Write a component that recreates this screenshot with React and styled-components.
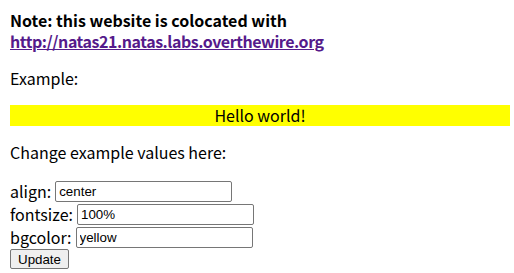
import React, { useState } from 'react'
import styled, { createGlobalStyle } from 'styled-components'

const GlobalStyle = createGlobalStyle`
  body {
    margin: 10px 4px 10px 10px;
    background: #fff;
    color: #000;
    font-family: "Noto Sans CJK KR", "Noto Sans", sans-serif;
    font-size: 16px;
    line-height: 21px;
  }
`

const Note = styled.div`
  font-weight: bold;
  a {
    color: #551a8b;
    text-decoration: underline;
    letter-spacing: -0.45px;
  }
`

const Para = styled.p`
  margin: 16px 0;
`

const Example = styled.div`
  background: ${p => p.bg};
  text-align: ${p => p.align};
  font-size: ${p => p.size};
  margin: 16px 0;
`

const Form = styled.form`
  display: flex;
  flex-direction: column;
  margin-top: 17px;
`

const Row = styled.div`
  display: flex;
  align-items: ${p => (p.top ? 'flex-start' : 'center')};
  gap: 4px;
  height: 23px;
`

const Input = styled.input`
  box-sizing: border-box;
  width: 177px;
  height: 21px;
  padding: 1px 3px;
  border: 1px solid #767676;
  border-radius: 2px;
  font-family: "Liberation Sans", Arial, sans-serif;
  font-size: 13.33px;
  color: #000;
  background: #fff;
`

const Button = styled.button`
  box-sizing: border-box;
  height: 20px;
  padding: 0 7px;
  border: 1px solid #767676;
  border-radius: 2px;
  background: #efefef;
  font-family: "Liberation Sans", Arial, sans-serif;
  font-size: 13.33px;
  color: #000;
`

export default function App() {
  const [values] = useState({ align: 'center', fontsize: '100%', bgcolor: 'yellow' })

  return (
    <>
      <GlobalStyle />
      <Note>
        Note: this website is colocated with
        <br />
        <a href="#">http://natas21.natas.labs.overthewire.org</a>
      </Note>
      <Para>Example:</Para>
      <Example bg={values.bgcolor} align={values.align} size={values.fontsize}>
        Hello world!
      </Example>
      <Para style={{ marginBottom: 0 }}>Change example values here:</Para>
      <Form onSubmit={e => e.preventDefault()}>
        <Row>
          align: <Input defaultValue={values.align} />
        </Row>
        <Row>
          fontsize: <Input defaultValue={values.fontsize} />
        </Row>
        <Row>
          bgcolor: <Input defaultValue={values.bgcolor} />
        </Row>
        <Row top>
          <Button type="submit">Update</Button>
        </Row>
      </Form>
    </>
  )
}
